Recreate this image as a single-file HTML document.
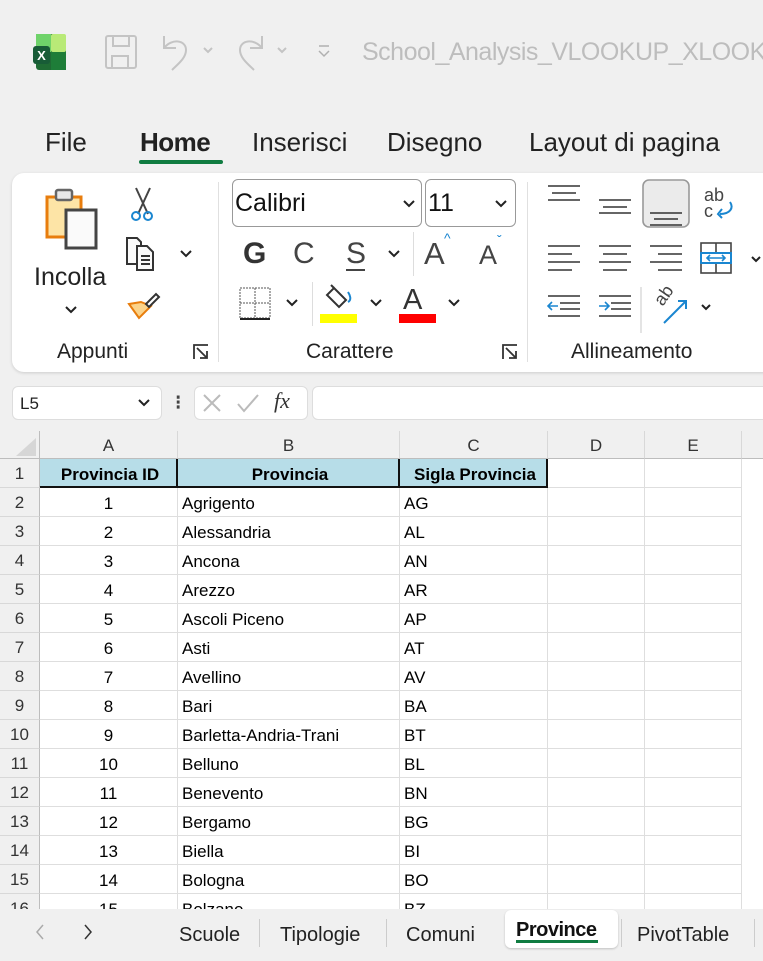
<!DOCTYPE html>
<html><head><meta charset="utf-8"><style>
*{margin:0;padding:0;box-sizing:border-box}
body{width:763px;height:961px;overflow:hidden;background:#f0f0f0;font-family:"Liberation Sans",sans-serif;position:relative;color:#222}
.a{position:absolute}
.t{position:absolute;white-space:nowrap}
.grid{position:absolute;left:0;top:431px;width:763px;height:478px;background:#fff;overflow:hidden}
.ch{position:absolute;top:0;height:28px;background:#f0f0f0;border-right:1px solid #d8d8d8;border-bottom:1px solid #bdbdbd;text-align:center;font-size:17px;line-height:29px;color:#333}
.rh{position:absolute;left:0;width:40px;height:29px;background:#f0f0f0;border-bottom:1px solid #d8d8d8;border-right:1px solid #bdbdbd;text-align:center;font-size:17px;line-height:30px;color:#333}
.c{position:absolute;height:29px;border-right:1px solid #dedede;border-bottom:1px solid #dedede;font-size:17px;line-height:31px;color:#000;padding-left:4px;white-space:nowrap}
.n{text-align:center;padding-left:0}
.h{background:#b7dde8;font-weight:bold;text-align:center;border-right:2px solid #111;border-bottom:2px solid #111}
</style></head><body>
<svg class="a" style="left:32px;top:32px" width="36" height="40" viewBox="0 0 36 40"><rect x="4" y="2" width="30" height="36" rx="3" fill="#1f6b34"/><rect x="4" y="2" width="15" height="18" fill="#6fd36a"/><rect x="19" y="2" width="15" height="18" rx="2" fill="#b9ea77"/><rect x="19" y="20" width="15" height="18" fill="#1e7d38"/><rect x="1" y="14" width="17" height="18" rx="3" fill="#185c37"/><text x="9.5" y="28" font-size="13" font-weight="bold" fill="#fff" text-anchor="middle" font-family="Liberation Sans">X</text></svg>
<svg class="a" style="left:104px;top:34px" width="34" height="36" viewBox="0 0 34 36" fill="none" stroke="#c4c4c4" stroke-width="2"><rect x="2" y="2" width="30" height="32" rx="2"/><rect x="9" y="2" width="16" height="10"/><rect x="8" y="22" width="16" height="12"/></svg>
<svg class="a" style="left:158px;top:32px" width="60" height="40" viewBox="0 0 60 40" fill="none" stroke="#c4c4c4" stroke-width="2"><path d="M6 4v12h12"/><path d="M6 16C14 6 28 8 28 18c0 8-8 14-14 20"/><path d="M46 16l4 4 4-4"/></svg>
<svg class="a" style="left:234px;top:32px" width="60" height="40" viewBox="0 0 60 40" fill="none" stroke="#c4c4c4" stroke-width="2"><path d="M28 4v12H16"/><path d="M28 16C20 6 6 8 6 18c0 8 8 14 14 20"/><path d="M44 16l4 4 4-4"/></svg>
<svg class="a" style="left:316px;top:44px" width="16" height="16" viewBox="0 0 16 16" fill="none" stroke="#b0b0b0" stroke-width="1.5"><path d="M3 2h10"/><path d="M3 7l5 5 5-5"/></svg>
<div class="t" style="left:362px;top:38px;font-size:25px;color:#bdbdbd;letter-spacing:-0.5px">School_Analysis_VLOOKUP_XLOOKUP</div>
<div class="t" style="left:45px;top:127px;font-size:26px;color:#222">File</div>
<div class="t" style="left:140px;top:127px;font-size:26px;color:#222;font-weight:bold;letter-spacing:-0.5px">Home</div>
<div class="a" style="left:139px;top:160px;width:84px;height:4px;background:#107c41;border-radius:2px"></div>
<div class="t" style="left:252px;top:127px;font-size:26px;color:#222">Inserisci</div>
<div class="t" style="left:387px;top:127px;font-size:26px;color:#222">Disegno</div>
<div class="t" style="left:529px;top:127px;font-size:26px;color:#222">Layout di pagina</div>
<div class="a" style="left:12px;top:173px;width:780px;height:199px;background:#fff;border-radius:12px;box-shadow:0 1px 3px rgba(0,0,0,.15)"></div>
<div class="a" style="left:218px;top:182px;width:1px;height:180px;background:#e0e0e0"></div>
<div class="a" style="left:527px;top:182px;width:1px;height:180px;background:#e0e0e0"></div>
<svg class="a" style="left:44px;top:186px" width="70" height="70" viewBox="0 0 70 70"><rect x="3" y="11" width="34" height="40" fill="#fde4a6" stroke="#e87d0d" stroke-width="3"/><rect x="12" y="4" width="16" height="10" rx="2" fill="#e8e8e8" stroke="#666" stroke-width="2.5"/><rect x="22" y="24" width="30" height="38" fill="#fafafa" stroke="#444" stroke-width="3"/></svg>
<div class="t" style="left:34px;top:263px;font-size:25px;color:#222">Incolla</div>
<svg class="a" style="left:63px;top:304px" width="16" height="12" viewBox="0 0 16 12" fill="none" stroke="#222" stroke-width="2"><path d="M3 3l5 5 5-5"/></svg>
<svg class="a" style="left:128px;top:186px" width="30" height="36" viewBox="0 0 30 36" fill="none" stroke-width="2"><path d="M8 2l12 26M22 2L10 28" stroke="#444"/><circle cx="8" cy="30" r="4" stroke="#1a86d0"/><circle cx="20" cy="30" r="4" stroke="#1a86d0"/></svg>
<svg class="a" style="left:124px;top:236px" width="38" height="36" viewBox="0 0 38 36" fill="#fafafa" stroke="#333" stroke-width="2"><path d="M3 2h10l4 4v22H3z"/><path d="M13 10h10l6 6v18H13z"/><path d="M17 20h9M17 24h9M17 28h9"/></svg>
<svg class="a" style="left:178px;top:248px" width="16" height="12" viewBox="0 0 16 12" fill="none" stroke="#222" stroke-width="2"><path d="M3 3l5 5 5-5"/></svg>
<svg class="a" style="left:126px;top:290px" width="36" height="32" viewBox="0 0 36 32"><path d="M3 14l10 14 12-12-10-4z" fill="#fbd38a" stroke="#e87d0d" stroke-width="2"/><path d="M20 14l10-10 3 3-10 10z" fill="#fff" stroke="#333" stroke-width="2"/></svg>
<div class="t" style="left:57px;top:340px;font-size:21px;color:#222">Appunti</div>
<svg class="a" style="left:192px;top:343px" width="18" height="18" viewBox="0 0 18 18" fill="none" stroke="#333" stroke-width="1.8"><path d="M2 16V2h14"/><path d="M5 5l10 10M15 8v7H8"/></svg>
<div class="a" style="left:232px;top:179px;width:190px;height:48px;border:1px solid #999;border-radius:6px"></div>
<div class="t" style="left:235px;top:189px;font-size:25px;color:#111">Calibri</div>
<svg class="a" style="left:401px;top:198px" width="16" height="12" viewBox="0 0 16 12" fill="none" stroke="#222" stroke-width="2"><path d="M3 3l5 5 5-5"/></svg>
<div class="a" style="left:425px;top:179px;width:91px;height:48px;border:1px solid #999;border-radius:6px"></div>
<div class="t" style="left:428px;top:189px;font-size:25px;color:#111">11</div>
<svg class="a" style="left:493px;top:198px" width="16" height="12" viewBox="0 0 16 12" fill="none" stroke="#222" stroke-width="2"><path d="M3 3l5 5 5-5"/></svg>
<div class="t" style="left:243px;top:237px;font-size:30px;font-weight:bold;color:#333">G</div>
<div class="t" style="left:293px;top:237px;font-size:30px;color:#444">C</div>
<div class="t" style="left:346px;top:237px;font-size:30px;color:#444">S</div>
<div class="a" style="left:346px;top:269px;width:19px;height:2px;background:#444"></div>
<svg class="a" style="left:386px;top:248px" width="16" height="12" viewBox="0 0 16 12" fill="none" stroke="#222" stroke-width="2"><path d="M3 3l5 5 5-5"/></svg>
<div class="a" style="left:413px;top:232px;width:1px;height:44px;background:#ddd"></div>
<div class="t" style="left:424px;top:236px;font-size:31px;color:#444">A</div>
<div class="t" style="left:444px;top:230px;font-size:14px;color:#1a86d0">^</div>
<div class="t" style="left:479px;top:240px;font-size:27px;color:#444">A</div>
<div class="t" style="left:497px;top:232px;font-size:14px;color:#1a86d0">ˇ</div>
<svg class="a" style="left:238px;top:286px" width="34" height="36" viewBox="0 0 34 36" fill="none" stroke="#555" stroke-width="1" stroke-dasharray="2 1"><rect x="2" y="2" width="30" height="30"/><path d="M17 2v30M2 17h30"/><path d="M2 33h30" stroke="#222" stroke-width="2" stroke-dasharray="0"/></svg>
<svg class="a" style="left:284px;top:297px" width="16" height="12" viewBox="0 0 16 12" fill="none" stroke="#222" stroke-width="2"><path d="M3 3l5 5 5-5"/></svg>
<div class="a" style="left:312px;top:282px;width:1px;height:44px;background:#ddd"></div>
<svg class="a" style="left:322px;top:284px" width="36" height="28" viewBox="0 0 36 28" fill="none" stroke-width="2"><path d="M12 4l12 12-7 7-12-12z" stroke="#333"/><path d="M12 4l-3-3" stroke="#333"/><path d="M26 8c2 3 4 8 0 10" stroke="#1a86d0"/></svg>
<div class="a" style="left:320px;top:314px;width:37px;height:9px;background:#ffff00"></div>
<svg class="a" style="left:368px;top:297px" width="16" height="12" viewBox="0 0 16 12" fill="none" stroke="#222" stroke-width="2"><path d="M3 3l5 5 5-5"/></svg>
<div class="t" style="left:403px;top:284px;font-size:29px;color:#333">A</div>
<div class="a" style="left:399px;top:314px;width:37px;height:9px;background:#f00"></div>
<svg class="a" style="left:446px;top:297px" width="16" height="12" viewBox="0 0 16 12" fill="none" stroke="#222" stroke-width="2"><path d="M3 3l5 5 5-5"/></svg>
<div class="t" style="left:306px;top:340px;font-size:21px;color:#222">Carattere</div>
<svg class="a" style="left:501px;top:343px" width="18" height="18" viewBox="0 0 18 18" fill="none" stroke="#333" stroke-width="1.8"><path d="M2 16V2h14"/><path d="M5 5l10 10M15 8v7H8"/></svg>
<svg class="a" style="left:530px;top:175px" width="233" height="160" viewBox="0 0 233 160" fill="none" stroke="#333" stroke-width="1.6">
<rect x="113" y="5" width="46" height="47" rx="6" fill="#ebebeb" stroke="#999"/>
<path d="M18 11h32M22 18h24M18 25h32"/>
<path d="M69 25h32M73 32h24M69 38h32"/>
<path d="M120 38h32M124 44h24M120 50h32"/>
<path d="M18 71h32M18 79h24M18 87h32M18 95h24"/>
<path d="M69 71h32M73 79h24M69 87h32M73 95h24"/>
<path d="M120 71h32M128 79h24M120 87h32M128 95h24"/>
<rect x="171" y="68" width="30" height="30" stroke="#444"/><path d="M171 78h30M171 88h30M186 68v10M186 88v10" stroke="#444"/><rect x="171" y="78" width="30" height="10" stroke="#1a86d0" stroke-width="2"/><path d="M177 83h18M180 80l-3 3 3 3M192 80l3 3-3 3" stroke="#1a86d0"/>
<path d="M222 82l4 4 4-4" stroke="#222" stroke-width="2"/>
<path d="M18 121h32M30 128h20M30 134h20M18 141h32"/><path d="M28 131h-10M22 127l-4 4 4 4" stroke="#1a86d0"/>
<path d="M69 121h32M81 128h20M81 134h20M69 141h32"/><path d="M69 131h10M75 127l4 4-4 4" stroke="#1a86d0"/>
<path d="M111 112v46" stroke="#ddd"/>
<path d="M134 148l22-22M148 126h8v8" stroke="#1a86d0" stroke-width="2"/>
<path d="M172 130l4 4 4-4" stroke="#222" stroke-width="2"/>
</svg>
<div class="t" style="left:704px;top:187px;font-size:18px;color:#444;line-height:16px">ab<br>c</div>
<svg class="a" style="left:712px;top:200px" width="24" height="20" viewBox="0 0 24 20" fill="none" stroke="#1a86d0" stroke-width="2"><path d="M18 2c4 6 0 12-10 12M10 9l-4 5 4 4"/></svg>
<div class="t" style="left:654px;top:285px;font-size:18px;color:#444;transform:rotate(-55deg)">ab</div>
<div class="t" style="left:571px;top:340px;font-size:21px;color:#222">Allineamento</div>
<div class="a" style="left:12px;top:386px;width:150px;height:34px;background:#fff;border:1px solid #ddd;border-radius:6px"></div>
<div class="t" style="left:20px;top:394px;font-size:17px;color:#222">L5</div>
<svg class="a" style="left:136px;top:397px" width="16" height="12" viewBox="0 0 16 12" fill="none" stroke="#222" stroke-width="2"><path d="M3 3l5 5 5-5"/></svg>
<div class="t" style="left:175px;top:390px;font-size:20px;color:#444;font-weight:bold">⁝</div>
<div class="a" style="left:194px;top:386px;width:114px;height:34px;background:#fff;border:1px solid #ddd;border-radius:6px"></div>
<svg class="a" style="left:200px;top:392px" width="66" height="22" viewBox="0 0 66 22" fill="none" stroke="#bbb" stroke-width="2"><path d="M4 3l16 16M20 3L4 19"/><path d="M38 12l6 7 14-16"/></svg>
<div class="t" style="left:274px;top:388px;font-size:22px;color:#333;font-style:italic;font-family:'Liberation Serif',serif">fx</div>
<div class="a" style="left:312px;top:386px;width:460px;height:34px;background:#fff;border:1px solid #ddd;border-radius:6px"></div>
<div class="grid">
<div class="a" style="left:0;top:0;width:40px;height:28px;background:#f0f0f0;border-right:1px solid #bdbdbd;border-bottom:1px solid #bdbdbd"></div>
<svg class="a" style="left:10px;top:5px" width="28" height="22"><path d="M26 2v18H6z" fill="#d6d6d6"/></svg>
<div class="ch" style="left:40px;width:138px">A</div>
<div class="ch" style="left:178px;width:222px">B</div>
<div class="ch" style="left:400px;width:148px">C</div>
<div class="ch" style="left:548px;width:97px">D</div>
<div class="ch" style="left:645px;width:97px">E</div>
<div class="ch" style="left:742px;width:40px"></div>
<div class="rh" style="top:28px">1</div>
<div class="c h" style="top:28px;left:40px;width:138px">Provincia ID</div>
<div class="c h" style="top:28px;left:178px;width:222px">Provincia</div>
<div class="c h" style="top:28px;left:400px;width:148px">Sigla Provincia</div>
<div class="c" style="top:28px;left:548px;width:97px"></div><div class="c" style="top:28px;left:645px;width:97px"></div>
<div class="rh" style="top:57px">2</div><div class="c n" style="top:57px;left:40px;width:138px">1</div><div class="c" style="top:57px;left:178px;width:222px">Agrigento</div><div class="c" style="top:57px;left:400px;width:148px">AG</div><div class="c" style="top:57px;left:548px;width:97px"></div><div class="c" style="top:57px;left:645px;width:97px"></div>
<div class="rh" style="top:86px">3</div><div class="c n" style="top:86px;left:40px;width:138px">2</div><div class="c" style="top:86px;left:178px;width:222px">Alessandria</div><div class="c" style="top:86px;left:400px;width:148px">AL</div><div class="c" style="top:86px;left:548px;width:97px"></div><div class="c" style="top:86px;left:645px;width:97px"></div>
<div class="rh" style="top:115px">4</div><div class="c n" style="top:115px;left:40px;width:138px">3</div><div class="c" style="top:115px;left:178px;width:222px">Ancona</div><div class="c" style="top:115px;left:400px;width:148px">AN</div><div class="c" style="top:115px;left:548px;width:97px"></div><div class="c" style="top:115px;left:645px;width:97px"></div>
<div class="rh" style="top:144px">5</div><div class="c n" style="top:144px;left:40px;width:138px">4</div><div class="c" style="top:144px;left:178px;width:222px">Arezzo</div><div class="c" style="top:144px;left:400px;width:148px">AR</div><div class="c" style="top:144px;left:548px;width:97px"></div><div class="c" style="top:144px;left:645px;width:97px"></div>
<div class="rh" style="top:173px">6</div><div class="c n" style="top:173px;left:40px;width:138px">5</div><div class="c" style="top:173px;left:178px;width:222px">Ascoli Piceno</div><div class="c" style="top:173px;left:400px;width:148px">AP</div><div class="c" style="top:173px;left:548px;width:97px"></div><div class="c" style="top:173px;left:645px;width:97px"></div>
<div class="rh" style="top:202px">7</div><div class="c n" style="top:202px;left:40px;width:138px">6</div><div class="c" style="top:202px;left:178px;width:222px">Asti</div><div class="c" style="top:202px;left:400px;width:148px">AT</div><div class="c" style="top:202px;left:548px;width:97px"></div><div class="c" style="top:202px;left:645px;width:97px"></div>
<div class="rh" style="top:231px">8</div><div class="c n" style="top:231px;left:40px;width:138px">7</div><div class="c" style="top:231px;left:178px;width:222px">Avellino</div><div class="c" style="top:231px;left:400px;width:148px">AV</div><div class="c" style="top:231px;left:548px;width:97px"></div><div class="c" style="top:231px;left:645px;width:97px"></div>
<div class="rh" style="top:260px">9</div><div class="c n" style="top:260px;left:40px;width:138px">8</div><div class="c" style="top:260px;left:178px;width:222px">Bari</div><div class="c" style="top:260px;left:400px;width:148px">BA</div><div class="c" style="top:260px;left:548px;width:97px"></div><div class="c" style="top:260px;left:645px;width:97px"></div>
<div class="rh" style="top:289px">10</div><div class="c n" style="top:289px;left:40px;width:138px">9</div><div class="c" style="top:289px;left:178px;width:222px">Barletta-Andria-Trani</div><div class="c" style="top:289px;left:400px;width:148px">BT</div><div class="c" style="top:289px;left:548px;width:97px"></div><div class="c" style="top:289px;left:645px;width:97px"></div>
<div class="rh" style="top:318px">11</div><div class="c n" style="top:318px;left:40px;width:138px">10</div><div class="c" style="top:318px;left:178px;width:222px">Belluno</div><div class="c" style="top:318px;left:400px;width:148px">BL</div><div class="c" style="top:318px;left:548px;width:97px"></div><div class="c" style="top:318px;left:645px;width:97px"></div>
<div class="rh" style="top:347px">12</div><div class="c n" style="top:347px;left:40px;width:138px">11</div><div class="c" style="top:347px;left:178px;width:222px">Benevento</div><div class="c" style="top:347px;left:400px;width:148px">BN</div><div class="c" style="top:347px;left:548px;width:97px"></div><div class="c" style="top:347px;left:645px;width:97px"></div>
<div class="rh" style="top:376px">13</div><div class="c n" style="top:376px;left:40px;width:138px">12</div><div class="c" style="top:376px;left:178px;width:222px">Bergamo</div><div class="c" style="top:376px;left:400px;width:148px">BG</div><div class="c" style="top:376px;left:548px;width:97px"></div><div class="c" style="top:376px;left:645px;width:97px"></div>
<div class="rh" style="top:405px">14</div><div class="c n" style="top:405px;left:40px;width:138px">13</div><div class="c" style="top:405px;left:178px;width:222px">Biella</div><div class="c" style="top:405px;left:400px;width:148px">BI</div><div class="c" style="top:405px;left:548px;width:97px"></div><div class="c" style="top:405px;left:645px;width:97px"></div>
<div class="rh" style="top:434px">15</div><div class="c n" style="top:434px;left:40px;width:138px">14</div><div class="c" style="top:434px;left:178px;width:222px">Bologna</div><div class="c" style="top:434px;left:400px;width:148px">BO</div><div class="c" style="top:434px;left:548px;width:97px"></div><div class="c" style="top:434px;left:645px;width:97px"></div>
<div class="rh" style="top:463px">16</div><div class="c n" style="top:463px;left:40px;width:138px">15</div><div class="c" style="top:463px;left:178px;width:222px">Bolzano</div><div class="c" style="top:463px;left:400px;width:148px">BZ</div><div class="c" style="top:463px;left:548px;width:97px"></div><div class="c" style="top:463px;left:645px;width:97px"></div>
</div>
<div class="a" style="left:0;top:909px;width:763px;height:52px;background:#f0f0f0"></div>
<svg class="a" style="left:30px;top:922px" width="70" height="20" viewBox="0 0 70 20" fill="none" stroke-width="1.5"><path d="M13 3l-6 7 6 7" stroke="#aaa"/><path d="M55 3l6 7-6 7" stroke="#333"/></svg>
<div class="t" style="left:179px;top:924px;font-size:20px;color:#222">Scuole</div>
<div class="a" style="left:259px;top:919px;width:1px;height:28px;background:#ccc"></div>
<div class="t" style="left:280px;top:924px;font-size:20px;color:#222">Tipologie</div>
<div class="a" style="left:386px;top:919px;width:1px;height:28px;background:#ccc"></div>
<div class="t" style="left:406px;top:924px;font-size:20px;color:#222">Comuni</div>
<div class="a" style="left:505px;top:910px;width:113px;height:38px;background:#fff;border-radius:6px;box-shadow:0 1px 2px rgba(0,0,0,.2)"></div>
<div class="t" style="left:516px;top:919px;font-size:20px;color:#111;font-weight:bold;letter-spacing:-0.5px">Province</div>
<div class="a" style="left:516px;top:940px;width:82px;height:3px;background:#107c41"></div>
<div class="a" style="left:621px;top:919px;width:1px;height:28px;background:#ccc"></div>
<div class="t" style="left:637px;top:924px;font-size:20px;color:#222">PivotTable</div>
<div class="a" style="left:754px;top:919px;width:1px;height:28px;background:#ccc"></div>
</body></html>
